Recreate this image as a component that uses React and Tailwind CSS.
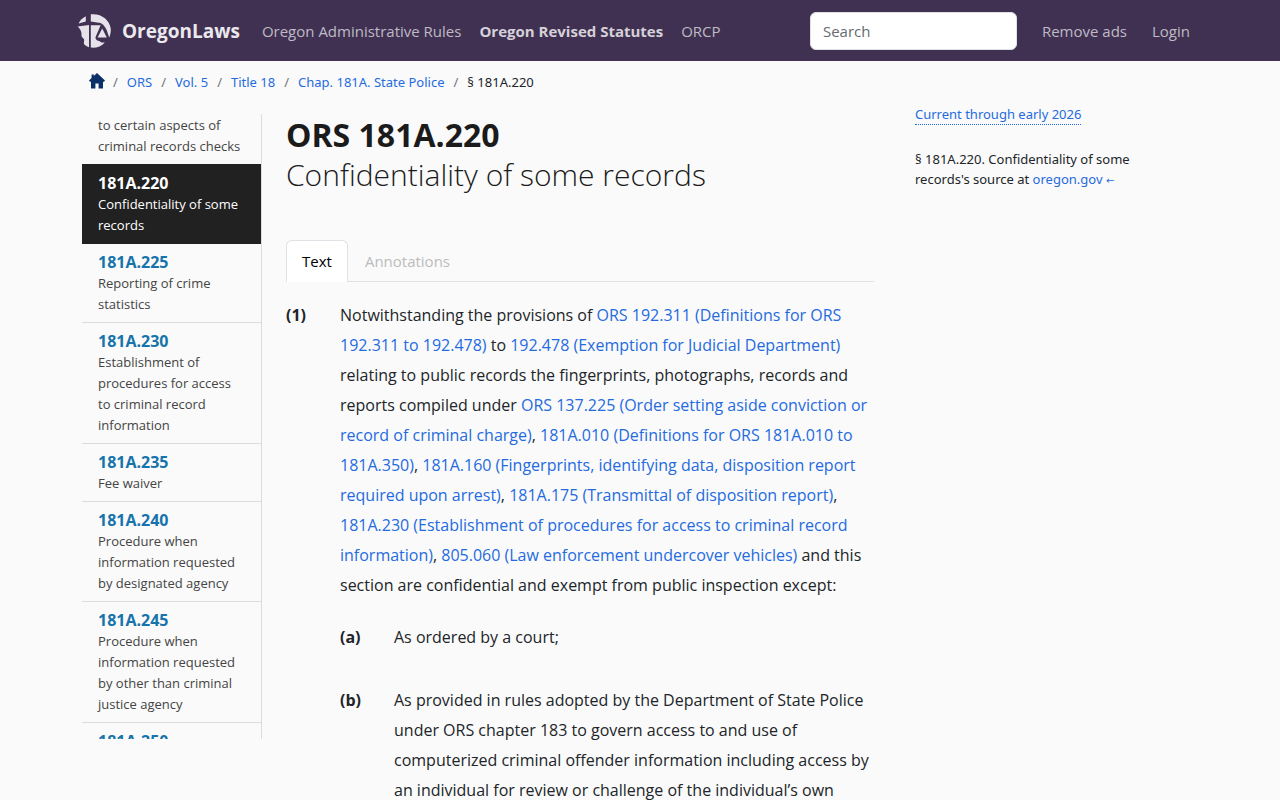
const sections = [
  { num: "181A.220", title: "Confidentiality of some records", active: true },
  { num: "181A.225", title: "Reporting of crime statistics" },
  { num: "181A.230", title: "Establishment of procedures for access to criminal record information" },
  { num: "181A.235", title: "Fee waiver" },
  { num: "181A.240", title: "Procedure when information requested by designated agency" },
  { num: "181A.245", title: "Procedure when information requested by other than criminal justice agency" },
  { num: "181A.250", title: "" },
];

const crumbs = ["ORS", "Vol. 5", "Title 18", "Chap. 181A. State Police"];

function Logo() {
  return (
    <svg viewBox="0 0 34 34" className="size-[34px] shrink-0" fill="#e6e2ea" aria-hidden="true">
      <path d="M8.8 2.2V7.6L1.6 9.4C3 6.4 5.6 3.8 8.8 2.2Z" />
      <path d="M13.8 0.3C24-1 32.4 5.6 33.7 14.2C34 17.4 33.5 20.6 32.2 23.6L31 20C29.8 15 27.4 11 23.6 9L13.8 7.6Z" />
      <path d="M0.6 12.4L12 11V33.2C10.6 32.8 8.8 31.8 7.6 30.8L6.8 29.4L7.2 25.6L4.6 22.4L4.4 18.8C4 16.4 2.6 14 0.6 12.4Z" />
      <path d="M13.8 11.2H23.6L18.4 23.4C18.8 25.6 20.2 26.8 22.2 27L24.4 28.4H27.8C24.6 32.2 19 34.4 13.8 33.6Z" />
      <path d="M25.2 14.6L29.8 23.4H20.6Z" />
    </svg>
  );
}

function House() {
  return (
    <svg viewBox="0 0 16 16" className="size-4" aria-hidden="true">
      <path fill="#0b2f66" d="M8 0L16 7.6L15 8.8H14V15.5H9.6V10.5H6.4V15.5H2V8.8H1L0 7.6L2.6 5.1V1.4H4.8V3Z" />
    </svg>
  );
}

function A({ children }) {
  return <a href="#" className="text-[#256be0]">{children}</a>;
}

function Clause({ label, children, className = "" }) {
  return (
    <div className={`flex ${className}`}>
      <div className="w-[54px] shrink-0 font-bold">{label}</div>
      <div className="min-w-0 flex-1">{children}</div>
    </div>
  );
}

function SectionList() {
  return (
    <nav
      aria-label="Sections"
      className="mt-[10px] h-[calc(100vh-175px)] w-[180px] shrink-0 overflow-y-auto border-r border-[#dcdcdc] [scrollbar-width:none]"
    >
      <a href="#" className="block pt-px pr-4 pb-[7px] pl-4 text-[13px] leading-[21px] text-[#444]">
        to certain aspects of criminal records checks
      </a>
      {sections.map((s) => (
        <a
          key={s.num}
          href="#"
          className={`block pt-[7px] pr-4 pb-[7px] pl-4 ${
            s.active ? "border-y border-[#212121] bg-[#212121] text-white" : "border-b border-[#dcdcdc] text-[#444]"
          }`}
        >
          <span className={`block text-base leading-[22px] font-bold ${s.active ? "text-white" : "text-[#1673ab]"}`}>
            {s.num}
          </span>
          <span className="block text-[13px] leading-[21px]">{s.title}</span>
        </a>
      ))}
    </nav>
  );
}

export default function App() {
  return (
    <div className="h-screen overflow-hidden bg-[#fafafa] font-['Open_Sans','Noto_Sans',sans-serif] text-[15px] text-[#212529]">
      <header className="bg-[#403152] text-[#bfbac5]">
        <div className="mx-auto flex h-[61px] max-w-[1140px] items-center pt-px pr-5 pl-[7px]">
          <a href="#" className="flex items-center gap-[11px] text-[19px] font-bold text-[#ebe8ee]">
            <Logo />
            OregonLaws
          </a>
          <nav aria-label="Main" className="ml-[22px] flex gap-[18px] whitespace-nowrap">
            <a href="#">Oregon Administrative Rules</a>
            <a href="#" className="font-bold text-[#d5d1d9]">Oregon Revised Statutes</a>
            <a href="#">ORCP</a>
          </nav>
          <input
            type="search"
            aria-label="Search"
            placeholder="Search"
            className="ml-auto h-[38px] w-[207px] rounded-md border border-[#dee2e6] bg-white px-3 text-[#212529] placeholder:text-[#666b70]"
          />
          <nav aria-label="Account" className="ml-[25px] flex gap-[25px] whitespace-nowrap">
            <a href="#">Remove ads</a>
            <a href="#">Login</a>
          </nav>
        </div>
      </header>

      <div className="mx-auto max-w-[1140px] px-3">
        <nav
          aria-label="Breadcrumb"
          className="flex h-[43px] items-center pl-[7px] font-['Noto_Sans','Open_Sans',sans-serif] text-[13px]"
        >
          <a href="#" aria-label="Home" className="-mr-px mb-1">
            <House />
          </a>
          {crumbs.map((c) => (
            <span key={c} className="flex">
              <span className="px-[9px] text-[#6c757d]">/</span>
              <A>{c}</A>
            </span>
          ))}
          <span className="px-[9px] text-[#6c757d]">/</span>
          <span>§ 181A.220</span>
        </nav>

        <div className="flex items-start">
          <SectionList />
          <main className="ml-6 w-[588px] shrink-0">
            <h1 className="mt-[11px] text-[#1b1b1b]">
              <span className="block text-[32px] leading-10 font-bold">ORS 181A.220</span>
              <span className="block text-[30px] leading-10 font-light">Confidentiality of some records</span>
            </h1>
            <div role="tablist" className="mt-[45px] flex border-b border-[#dee2e6]">
              <button
                role="tab"
                aria-selected="true"
                className="-mb-px h-[42px] rounded-t-md border border-b-0 border-[#dee2e6] bg-white px-[15px] text-black"
              >
                Text
              </button>
              <button role="tab" aria-selected="false" className="h-[41px] px-[17px] pt-px text-[#bcbcbc]">
                Annotations
              </button>
            </div>
            <div className="mt-[18px] text-base leading-[30px]">
              <Clause label="(1)">
                <p>
                  Notwithstanding the provisions of <A>ORS 192.311 (Definitions for ORS 192.311 to 192.478)</A> to{" "}
                  <A>192.478 (Exemption for Judicial Department)</A> relating to public records the fingerprints,
                  photographs, records and reports compiled under{" "}
                  <A>ORS 137.225 (Order setting aside conviction or record of criminal charge)</A>,{" "}
                  <A>181A.010 (Definitions for ORS 181A.010 to 181A.350)</A>,{" "}
                  <A>181A.160 (Fingerprints, identifying data, disposition report required upon arrest)</A>,{" "}
                  <A>181A.175 (Transmittal of disposition report)</A>,{" "}
                  <A>181A.230 (Establishment of procedures for access to criminal record information)</A>,{" "}
                  <A>805.060 (Law enforcement undercover vehicles)</A> and this section are confidential and exempt
                  from public inspection except:
                </p>
                <Clause label="(a)" className="mt-[22px]">
                  As ordered by a court;
                </Clause>
                <Clause label="(b)" className="mt-[33px]">
                  As provided in rules adopted by the Department of State Police under ORS chapter 183 to govern
                  access to and use of computerized criminal offender information including access by an individual
                  for review or challenge of the individual’s own
                </Clause>
              </Clause>
            </div>
          </main>
          <aside className="ml-[41px] w-[240px] font-['Noto_Sans','Open_Sans',sans-serif] text-[13px] leading-5">
            <p>
              <a href="#" className="inline-block border-b border-dotted border-[#256be0] text-[#256be0]">
                Current through early 2026
              </a>
            </p>
            <p className="mt-6">
              § 181A.220. Confidentiality of some records's source at{" "}
              <A>
                oregon.gov <span className="font-['DejaVu_Sans'] text-[10px]">←</span>
              </A>
            </p>
          </aside>
        </div>
      </div>
    </div>
  );
}
